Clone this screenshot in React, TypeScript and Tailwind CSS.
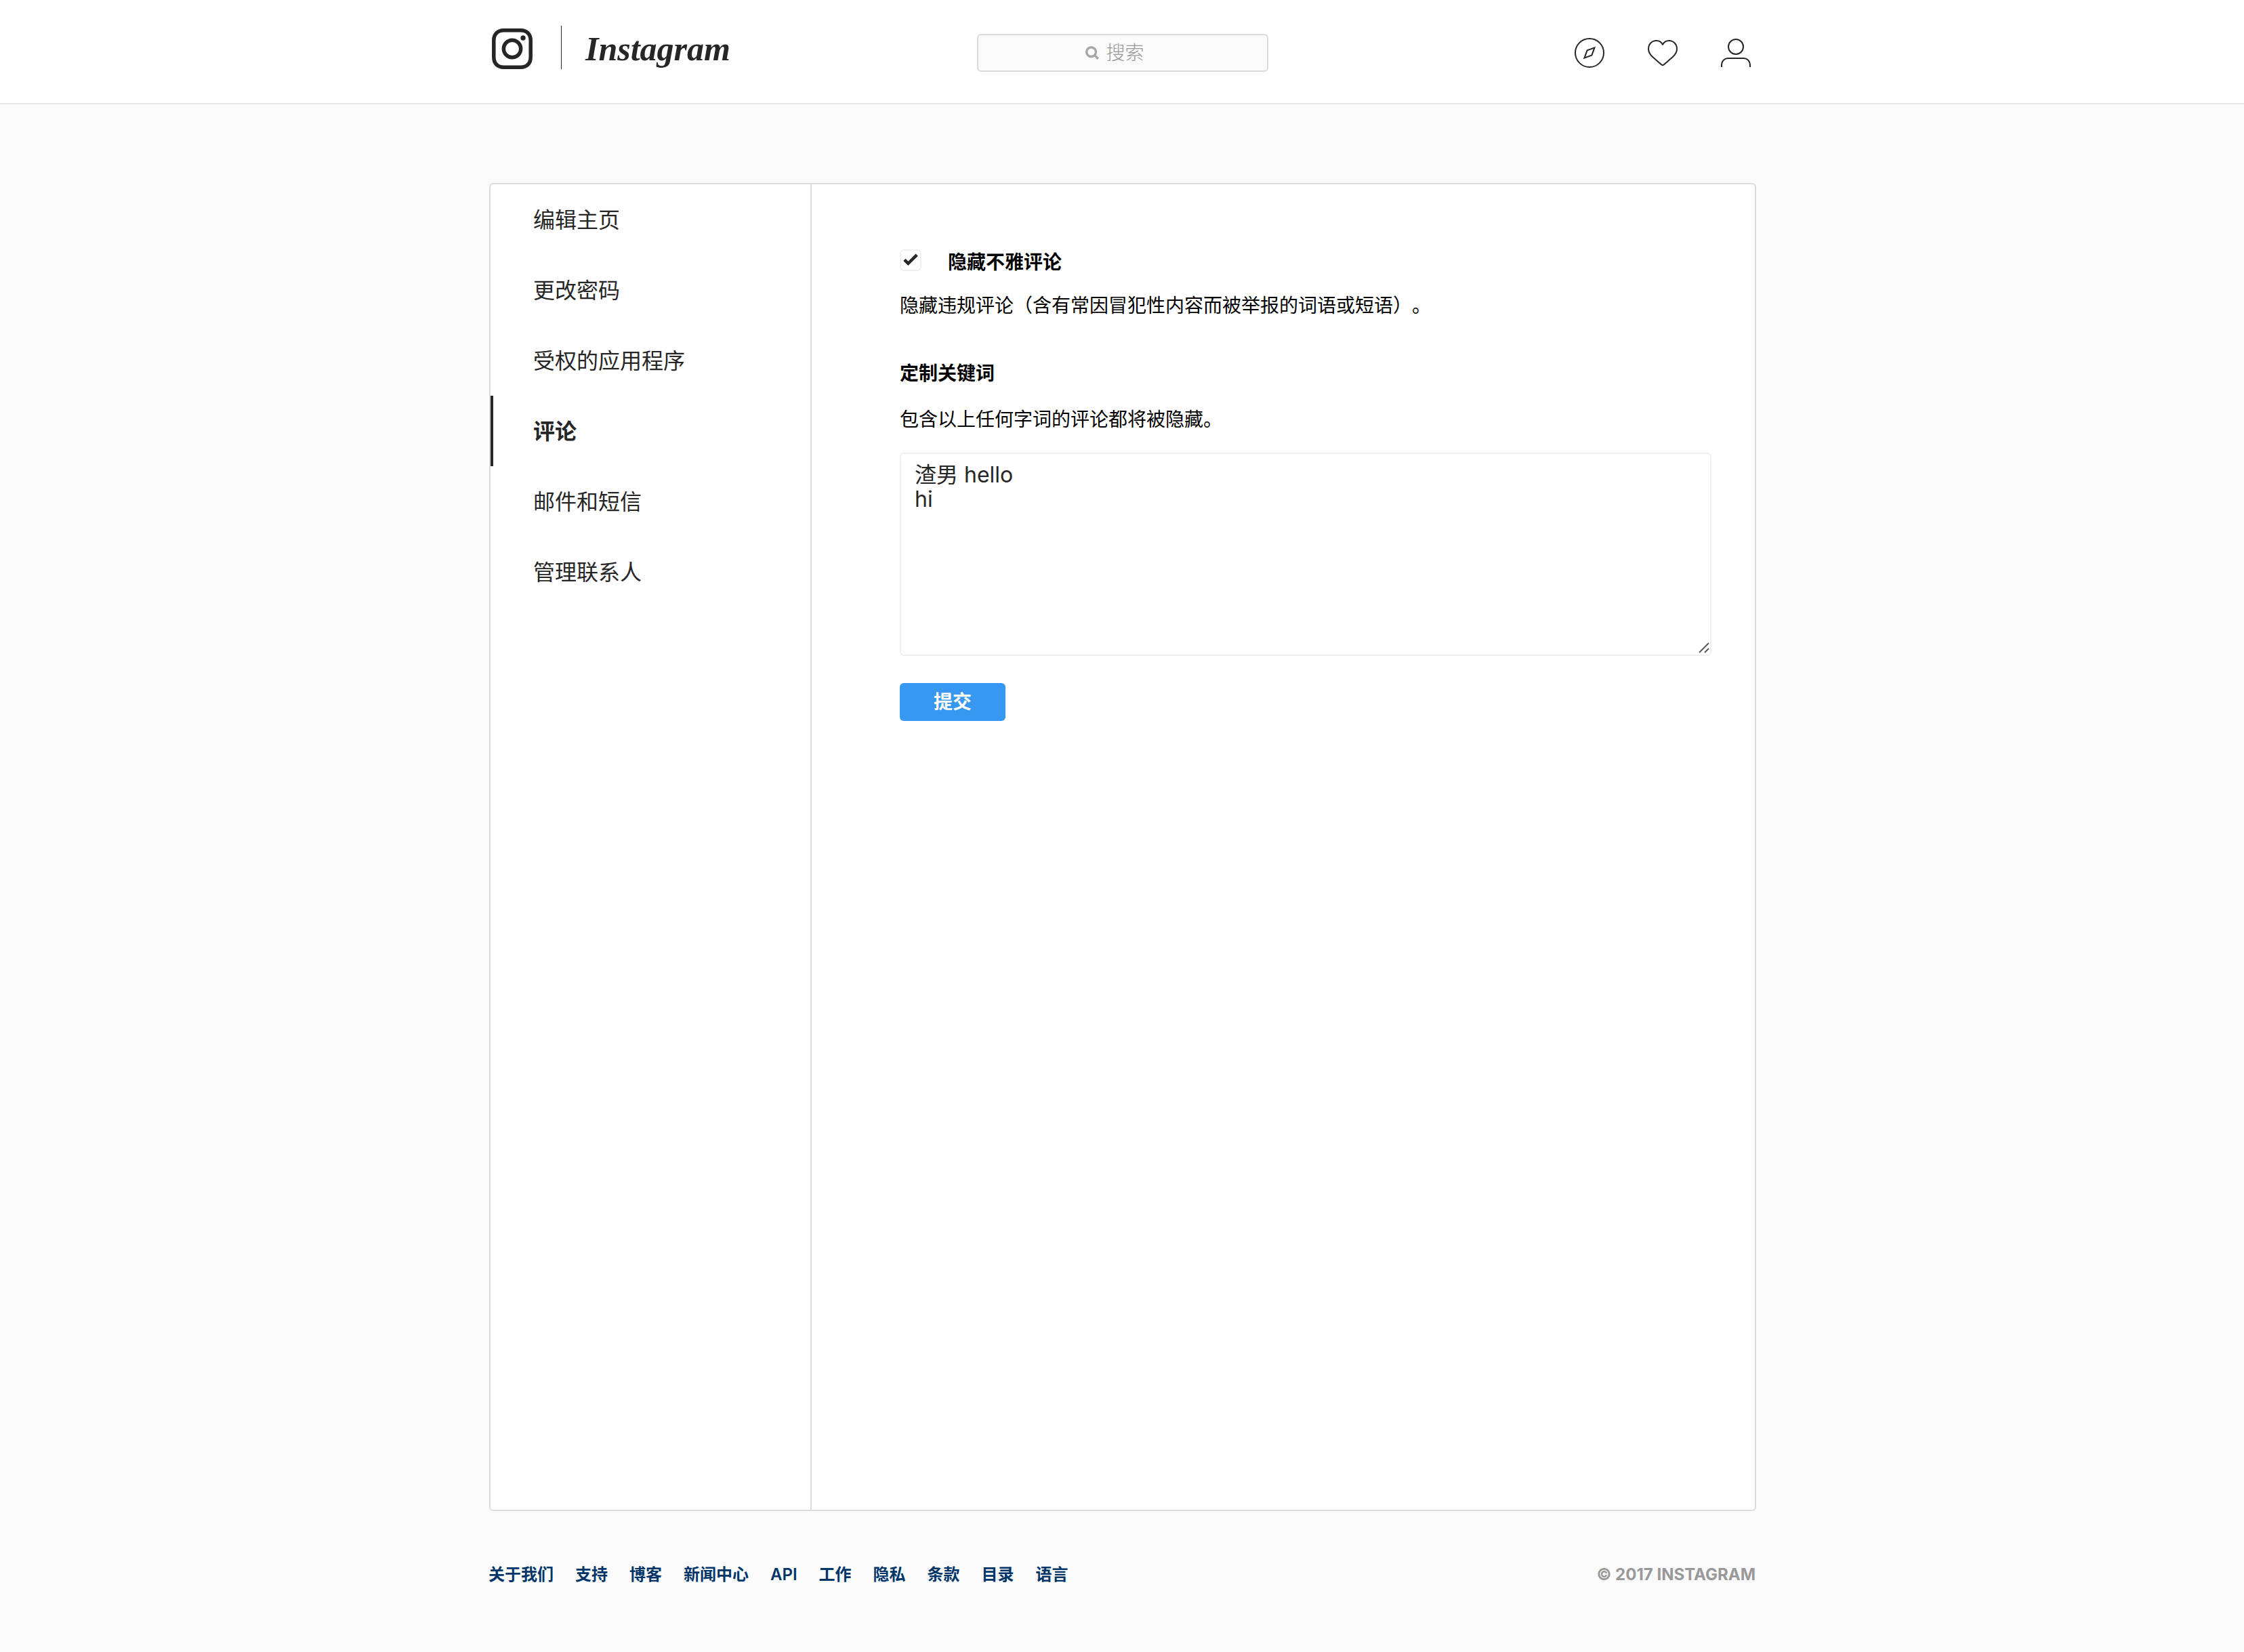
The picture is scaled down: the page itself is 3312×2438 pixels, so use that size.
import React from "react";

const navItems = ["编辑主页", "更改密码", "受权的应用程序", "评论", "邮件和短信", "管理联系人"];
const activeItem = "评论";
const footerLinks = ["关于我们", "支持", "博客", "新闻中心", "API", "工作", "隐私", "条款", "目录", "语言"];

function CameraGlyph() {
  return (
    <svg className="size-[60px] shrink-0" viewBox="0 0 60 60" fill="none" stroke="#262626" aria-hidden="true">
      <path
        d="M17.5 2.8 H42.5 C51.5 2.8 57.2 8.5 57.2 17.5 V42.5 C57.2 51.5 51.5 57.2 42.5 57.2 H17.5 C8.5 57.2 2.8 51.5 2.8 42.5 V17.5 C2.8 8.5 8.5 2.8 17.5 2.8 Z"
        strokeWidth="5.5"
      />
      <circle cx="30" cy="30" r="12.7" strokeWidth="5.4" />
      <circle cx="46" cy="14" r="3.7" fill="#262626" stroke="none" />
    </svg>
  );
}

function CompassIcon() {
  return (
    <svg className="size-11" viewBox="0 0 44 44" fill="none" stroke="#262626" strokeWidth="2" aria-hidden="true">
      <circle cx="22" cy="22" r="21" />
      <path d="M29.4 14.4 L18.6 18.4 L14.4 29.6 L25.4 25.4 Z" />
    </svg>
  );
}

function HeartIcon() {
  return (
    <svg className="size-11" viewBox="0 0 44 44" fill="none" stroke="#262626" strokeWidth="2" strokeLinejoin="round" aria-hidden="true">
      <path d="M22 9.8 C20 6 16.3 4 12.6 4 C6 4 1 9.4 1 16.2 C1 21.6 3.6 25 8 28.8 C12.5 32.8 17 36.4 20.4 39.6 Q22 41 23.6 39.6 C27 36.4 31.5 32.8 36 28.8 C40.4 25 43 21.6 43 16.2 C43 9.4 38 4 31.4 4 C27.7 4 24 6 22 9.8 Z" />
    </svg>
  );
}

function PersonIcon() {
  return (
    <svg className="size-11" viewBox="0 0 44 44" fill="none" stroke="#262626" strokeWidth="2" aria-hidden="true">
      <circle cx="22" cy="13" r="11" />
      <path d="M1 43 V39.5 A9.5 9.5 0 0 1 10.5 30 H33.5 A9.5 9.5 0 0 1 43 39.5 V43" />
    </svg>
  );
}

function Header() {
  return (
    <header className="border-b-2 border-[#e6e6e6] bg-white pl-0.5">
      <div className="mx-auto grid h-[152px] max-w-[1870px] grid-cols-[1fr_430px_1fr] items-center">
        <a href="#" aria-label="Instagram" className="flex items-center gap-[35px] pb-2 pl-1">
          <CameraGlyph />
          <span className="mb-1 ml-[7px] h-16 w-px bg-[#262626]" />
          <span className="font-['Liberation_Serif'] text-[50px] leading-[64px] font-bold text-[#262626] italic">Instagram</span>
        </a>
        <div className="relative mt-1">
          <input
            type="search"
            aria-label="搜索"
            placeholder="搜索"
            className="block h-14 w-full appearance-none rounded-md border-2 border-[#dbdbdb] bg-[#fafafa] pr-3 pl-8 text-center text-[28px] font-light text-[#262626] indent-2.5 outline-none placeholder:text-[#999]"
          />
          <svg className="pointer-events-none absolute top-[18px] left-40 size-5" viewBox="0 0 20 20" fill="none" stroke="#a5a7aa" strokeWidth="3.4" aria-hidden="true">
            <circle cx="8.6" cy="8.6" r="6.9" />
            <path d="M13.2 13.2 L18.8 18.8" />
          </svg>
        </div>
        <nav className="mt-1 flex items-center justify-end gap-16 pr-2">
          <a href="#" aria-label="发现"><CompassIcon /></a>
          <a href="#" aria-label="动态"><HeartIcon /></a>
          <a href="#" aria-label="主页"><PersonIcon /></a>
        </nav>
      </div>
    </header>
  );
}

function Sidebar() {
  return (
    <nav className="w-[474px] shrink-0 border-r-2 border-[#dbdbdb]">
      <ul>
        {navItems.map((item) => (
          <li key={item}>
            <a
              href="#"
              aria-current={item === activeItem ? "page" : undefined}
              className={
                item === activeItem
                  ? "block border-l-4 border-[#262626] pt-[33px] pb-[31px] pl-[59px] text-[32px] leading-10 font-semibold"
                  : "block border-l-4 border-transparent pt-[33px] pb-[31px] pl-[59px] text-[32px] leading-10"
              }
            >
              {item}
            </a>
          </li>
        ))}
      </ul>
    </nav>
  );
}

function CommentSettings() {
  return (
    <form className="min-w-0 flex-1 pt-24 pr-16 pl-[130px] text-[28px] leading-[38px] text-black" onSubmit={(e) => e.preventDefault()}>
      <div className="flex items-start gap-[39px]">
        <span className="relative size-8">
          <input
            id="hide-offensive"
            type="checkbox"
            defaultChecked
            className="peer block size-8 appearance-none rounded-md border-2 border-[#efefef] bg-white"
          />
          <svg className="pointer-events-none absolute inset-0 hidden size-8 peer-checked:block" viewBox="0 0 32 32" fill="none" stroke="#262626" strokeWidth="4.6" aria-hidden="true">
            <path d="M6.9 15.3 L12.4 20.8 L25.2 8.2" />
          </svg>
        </span>
        <label htmlFor="hide-offensive" className="font-semibold">隐藏不雅评论</label>
      </div>
      <p className="mt-[26px] [text-spacing-trim:space-all]">隐藏违规评论（含有常因冒犯性内容而被举报的词语或短语）。</p>
      <h2 className="mt-[62px] font-semibold">
        <label htmlFor="keywords">定制关键词</label>
      </h2>
      <p className="mt-[30px]">包含以上任何字词的评论都将被隐藏。</p>
      <div className="relative mt-[30px]">
        <textarea
          id="keywords"
          defaultValue={"渣男 hello\nhi"}
          className="block h-[300px] w-full resize-none rounded-md border-2 border-[#efefef] bg-white px-5 py-[13px] text-[32px] leading-9 text-[#262626] outline-none"
        />
        <svg className="pointer-events-none absolute right-[3px] bottom-1 size-4" viewBox="0 0 16 16" fill="none" stroke="#5a5a5a" strokeWidth="2" aria-hidden="true">
          <path d="M1 15 L15 1 M9 15 L15 9" />
        </svg>
      </div>
      <button type="submit" className="mt-10 h-14 w-[156px] rounded-md bg-[#3897f0] font-bold text-white">提交</button>
    </form>
  );
}

function Footer() {
  return (
    <footer>
      <div className="mx-auto flex h-[208px] max-w-[1870px] items-start justify-between pt-[76px] text-2xl leading-9">
        <nav>
          <ul className="flex gap-8">
            {footerLinks.map((link) => (
              <li key={link}>
                <a href="#" className="font-semibold text-[#003569]">{link}</a>
              </li>
            ))}
          </ul>
        </nav>
        <span className="font-bold text-[#999]">© 2017 INSTAGRAM</span>
      </div>
    </footer>
  );
}

export default function App() {
  return (
    <div lang="zh-CN" className="flex min-h-screen flex-col bg-[#fafafa] font-['Inter','Noto_Sans_CJK_SC',sans-serif] text-[#262626]">
      <Header />
      <main className="flex flex-1 flex-col pt-[116px] pl-0.5">
        <div className="mx-auto flex w-full max-w-[1870px] flex-1 rounded-md border-2 border-[#dbdbdb] bg-white">
          <Sidebar />
          <CommentSettings />
        </div>
      </main>
      <Footer />
    </div>
  );
}
